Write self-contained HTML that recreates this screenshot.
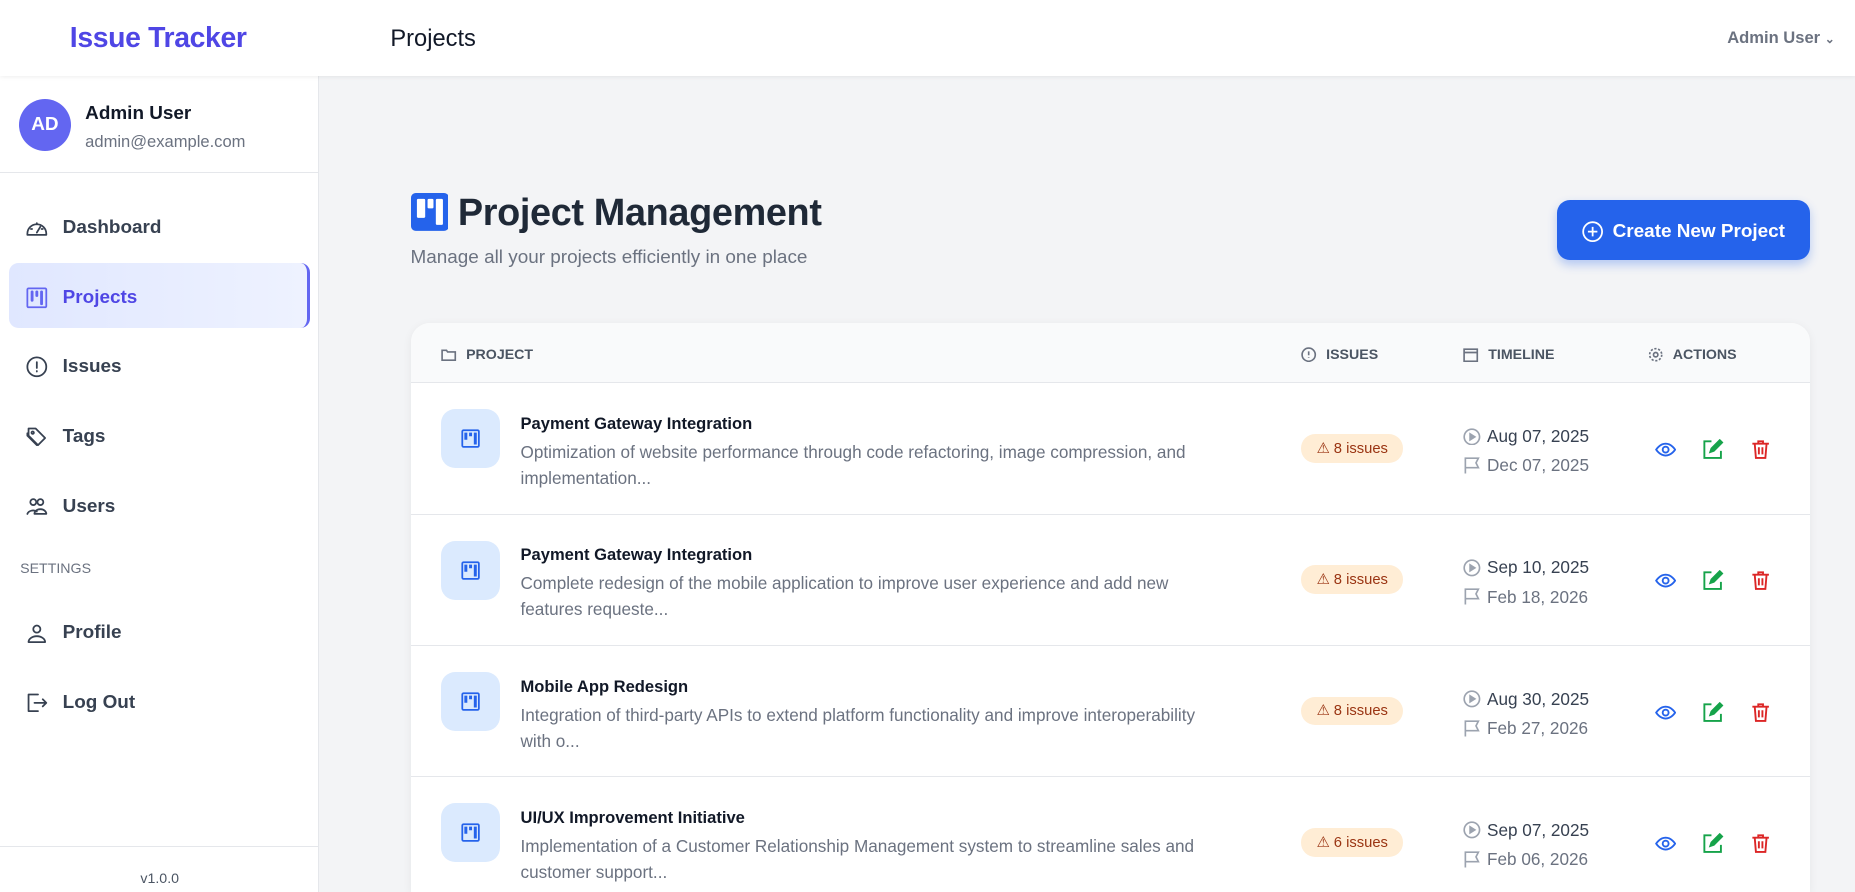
<!DOCTYPE html>
<html><head><meta charset="utf-8"><style>
*{box-sizing:border-box;margin:0;padding:0}
html,body{width:1855px;height:892px;overflow:hidden}
body{font-family:"Liberation Sans",sans-serif;background:#f3f4f6;}
#w{position:absolute;left:0;top:0;width:1568px;height:754px;zoom:1.18304;overflow:hidden;background:#f3f4f6}
.a{position:absolute;white-space:nowrap}
.hdr{left:0;top:0;width:1568px;height:64px;background:#fff;box-shadow:0 1px 4px rgba(0,0,0,.08);z-index:2}
.sb{left:0;top:64px;width:270px;height:690px;background:#fff;border-right:1px solid #e5e7eb}
.nav{position:absolute;left:8px;width:254px;height:55px;display:flex;align-items:center;padding-left:13px;padding-top:4px;font-size:16px;font-weight:bold;color:#374151}
.nav svg{width:20px;height:20px;margin-right:12px;fill:none;stroke:#374151;stroke-width:1.5;stroke-linecap:round;stroke-linejoin:round}
.card{left:347px;top:273px;width:1183px;height:481px;background:#fff;border-radius:16px 16px 0 0;box-shadow:0 2px 8px rgba(0,0,0,.06);overflow:hidden}
.th{position:absolute;top:0;left:0;width:100%;height:51px;background:#f9fafb;border-bottom:1px solid #e5e7eb;font-size:12px;font-weight:bold;color:#4b5563}
.th span{position:absolute;top:20px;display:flex;align-items:center}
.th svg{width:13px;height:13px;margin-right:8px;fill:none;stroke:#6b7280;stroke-width:1.5}
.row{position:absolute;left:0;width:100%;height:111px;border-bottom:1px solid #e5e7eb}
.ib{position:absolute;left:26px;top:22px;width:50px;height:50px;border-radius:12px;background:#dbeafe}
.ttl{position:absolute;left:93px;top:26px;font-size:14px;font-weight:bold;color:#111827}
.ds{position:absolute;left:93px;top:47px;width:585px;white-space:normal;font-size:14.5px;line-height:22px;color:#6b7280}
.bd{position:absolute;left:753px;top:43px;width:86px;height:24px;border-radius:12px;background:#ffedd5;color:#9a3412;font-size:12.5px;display:flex;align-items:center;justify-content:center}
.d1,.d2{position:absolute;left:890px;font-size:14.5px;display:flex;align-items:center}
.d1{top:36px;color:#374151}.d2{top:61px;color:#6b7280}
.d1 svg,.d2 svg{width:15px;height:15px;margin-right:5px;fill:none;stroke:#9ca3af;stroke-width:1.4}
.ac{position:absolute;top:47px;width:18px;height:18px}
</style></head><body><div id="w">
<div class="a hdr">
 <div class="a" style="left:59px;top:19px;font-size:24px;font-weight:bold;color:#4f46e5;letter-spacing:-.3px">Issue Tracker</div>
 <div class="a" style="left:330px;top:22px;font-size:20px;color:#111827">Projects</div>
 <div class="a" style="left:1460px;top:24px;font-size:14px;color:#6b7280;font-weight:bold">Admin User <span style="font-size:10px">&#8964;</span></div>
</div>
<div class="a sb">
 <div class="a" style="left:16px;top:20px;width:44px;height:44px;border-radius:50%;background:#6366f1;color:#fff;font-weight:bold;font-size:16px;display:flex;align-items:center;justify-content:center">AD</div>
 <div class="a" style="left:72px;top:23px;font-size:16px;font-weight:bold;color:#111827">Admin User</div>
 <div class="a" style="left:72px;top:48px;font-size:14px;color:#6b7280">admin@example.com</div>
 <div class="a" style="left:0;top:81px;width:270px;height:1px;background:#e5e7eb"></div>
 <div class="nav" style="top:99px"><svg viewBox="0 0 20 20"><path d="M2 15a8 8 0 1 1 16 0v1H2z"/><path d="M10 14l3-5"/><path d="M5 11h1M14 11h1M10 6v1"/></svg>Dashboard</div>
 <div class="nav" style="top:158px;background:linear-gradient(90deg,#e0e7ff,#eef2ff);border-right:3px solid #6366f1;border-radius:8px;color:#4f46e5"><svg viewBox="0 0 20 20" style="stroke:#6366f1"><rect x="2" y="2" width="16" height="16" rx="1"/><path d="M6 5v7M10 5v3M14 5v10" stroke-width="2.4"/></svg>Projects</div>
 <div class="nav" style="top:217px"><svg viewBox="0 0 20 20"><circle cx="10" cy="10" r="8"/><path d="M10 6v5M10 13.5v.5"/></svg>Issues</div>
 <div class="nav" style="top:276px"><svg viewBox="0 0 20 20"><path d="M3 3h6l8 8-6 6-8-8z"/><circle cx="6.5" cy="6.5" r="1"/><path d="M2 7v2l8 8"/></svg>Tags</div>
 <div class="nav" style="top:335px"><svg viewBox="0 0 20 20"><circle cx="7" cy="6" r="2.5"/><circle cx="13" cy="6" r="2.5"/><path d="M2 16a5 4 0 0 1 8-2M8 16a5 4 0 0 1 10 0z"/></svg>Users</div>
 <div class="a" style="left:17px;top:410px;font-size:12px;color:#6b7280">SETTINGS</div>
 <div class="nav" style="top:442px"><svg viewBox="0 0 20 20"><circle cx="10" cy="6" r="3"/><path d="M3 17a7 5 0 0 1 14 0z"/></svg>Profile</div>
 <div class="nav" style="top:501px"><svg viewBox="0 0 20 20"><path d="M11 3H3v14h8"/><path d="M8 10h10M15 7l3 3-3 3"/></svg>Log Out</div>
 <div class="a" style="left:0;top:651px;width:270px;height:1px;background:#e5e7eb"></div>
 <div class="a" style="left:0;top:672px;width:270px;text-align:center;font-size:12px;color:#4b5563">v1.0.0</div>
</div>
<svg class="a" style="left:347px;top:163px" width="32" height="32" viewBox="0 0 32 32"><rect width="32" height="32" rx="4" fill="#2563eb"/><rect x="5" y="5" width="7" height="16" rx="1" fill="#fff"/><rect x="14" y="5" width="5" height="8" rx="1" fill="#fff"/><rect x="21" y="5" width="6" height="22" rx="1" fill="#fff"/></svg>
<div class="a" style="left:387px;top:162px;font-size:32px;font-weight:bold;color:#1f2937;letter-spacing:-.3px">Project Management</div>
<div class="a" style="left:347px;top:209px;font-size:16px;color:#6b7280">Manage all your projects efficiently in one place</div>
<div class="a" style="left:1316px;top:169px;width:214px;height:51px;border-radius:11px;background:#2563eb;box-shadow:0 4px 8px rgba(37,99,235,.3);color:#fff;font-size:16px;font-weight:bold;display:flex;align-items:center;justify-content:center;padding-top:3px"><svg width="18" height="18" viewBox="0 0 18 18" style="margin-right:8px" fill="none" stroke="#fff" stroke-width="1.5"><circle cx="9" cy="9" r="8"/><path d="M9 5v8M5 9h8"/></svg>Create New Project</div>
<div class="a card">
 <div class="th">
  <span style="left:26px"><svg viewBox="0 0 14 14"><path d="M1 3h4l1 1.5h7V12H1z"/></svg>PROJECT</span>
  <span style="left:753px"><svg viewBox="0 0 14 14"><circle cx="7" cy="7" r="6"/><path d="M7 4v3.5M7 9.5v.5"/></svg>ISSUES</span>
  <span style="left:890px"><svg viewBox="0 0 14 14"><rect x="1" y="2" width="12" height="11"/><path d="M1 5h12"/></svg>TIMELINE</span>
  <span style="left:1046px"><svg viewBox="0 0 14 14"><circle cx="7" cy="7" r="2"/><circle cx="7" cy="7" r="5.5" stroke-dasharray="2 1.5"/></svg>ACTIONS</span>
 </div>
 <div class="row" style="top:51px"><div class="ib"><svg width="50" height="50" viewBox="0 0 50 50" fill="none" stroke="#2563eb"><rect x="18" y="18" width="14" height="14" stroke-width="1.5" rx="1"/><path d="M21 20v6M25 20v3M29 20v10" stroke-width="2.5"/></svg></div><div class="ttl">Payment Gateway Integration</div><div class="ds">Optimization of website performance through code refactoring, image compression, and implementation...</div><div class="bd">⚠ 8 issues</div><div class="d1"><svg viewBox="0 0 15 15"><circle cx="7.5" cy="7.5" r="6.5"/><path d="M6 5v5l4-2.5z" fill="#9ca3af"/></svg>Aug 07, 2025</div><div class="d2"><svg viewBox="0 0 15 15"><path d="M2 14V1h11l-2 4 2 4H2"/></svg>Dec 07, 2025</div>
 <svg class="ac" style="left:1052px" viewBox="0 0 18 18" fill="none" stroke="#2563eb" stroke-width="1.6"><path d="M1 9s3-5 8-5 8 5 8 5-3 5-8 5-8-5-8-5z"/><circle cx="9" cy="9" r="2.5"/></svg><svg class="ac" style="left:1092px" viewBox="0 0 18 18" fill="none" stroke="#16a34a" stroke-width="1.6"><path d="M8 2H2v14h14v-6"/><path d="M7 11l1-3 7-7 2 2-7 7z" fill="#16a34a"/></svg><svg class="ac" style="left:1132px" viewBox="0 0 18 18" fill="none" stroke="#dc2626" stroke-width="1.6"><path d="M2 4h14M7 4V2h4v2M4 4l1 12h8l1-12M7.5 7v6M10.5 7v6"/></svg></div>
 <div class="row" style="top:162px"><div class="ib"><svg width="50" height="50" viewBox="0 0 50 50" fill="none" stroke="#2563eb"><rect x="18" y="18" width="14" height="14" stroke-width="1.5" rx="1"/><path d="M21 20v6M25 20v3M29 20v10" stroke-width="2.5"/></svg></div><div class="ttl">Payment Gateway Integration</div><div class="ds">Complete redesign of the mobile application to improve user experience and add new features requeste...</div><div class="bd">⚠ 8 issues</div><div class="d1"><svg viewBox="0 0 15 15"><circle cx="7.5" cy="7.5" r="6.5"/><path d="M6 5v5l4-2.5z" fill="#9ca3af"/></svg>Sep 10, 2025</div><div class="d2"><svg viewBox="0 0 15 15"><path d="M2 14V1h11l-2 4 2 4H2"/></svg>Feb 18, 2026</div>
 <svg class="ac" style="left:1052px" viewBox="0 0 18 18" fill="none" stroke="#2563eb" stroke-width="1.6"><path d="M1 9s3-5 8-5 8 5 8 5-3 5-8 5-8-5-8-5z"/><circle cx="9" cy="9" r="2.5"/></svg><svg class="ac" style="left:1092px" viewBox="0 0 18 18" fill="none" stroke="#16a34a" stroke-width="1.6"><path d="M8 2H2v14h14v-6"/><path d="M7 11l1-3 7-7 2 2-7 7z" fill="#16a34a"/></svg><svg class="ac" style="left:1132px" viewBox="0 0 18 18" fill="none" stroke="#dc2626" stroke-width="1.6"><path d="M2 4h14M7 4V2h4v2M4 4l1 12h8l1-12M7.5 7v6M10.5 7v6"/></svg></div>
 <div class="row" style="top:273px"><div class="ib"><svg width="50" height="50" viewBox="0 0 50 50" fill="none" stroke="#2563eb"><rect x="18" y="18" width="14" height="14" stroke-width="1.5" rx="1"/><path d="M21 20v6M25 20v3M29 20v10" stroke-width="2.5"/></svg></div><div class="ttl">Mobile App Redesign</div><div class="ds">Integration of third-party APIs to extend platform functionality and improve interoperability with o...</div><div class="bd">⚠ 8 issues</div><div class="d1"><svg viewBox="0 0 15 15"><circle cx="7.5" cy="7.5" r="6.5"/><path d="M6 5v5l4-2.5z" fill="#9ca3af"/></svg>Aug 30, 2025</div><div class="d2"><svg viewBox="0 0 15 15"><path d="M2 14V1h11l-2 4 2 4H2"/></svg>Feb 27, 2026</div>
 <svg class="ac" style="left:1052px" viewBox="0 0 18 18" fill="none" stroke="#2563eb" stroke-width="1.6"><path d="M1 9s3-5 8-5 8 5 8 5-3 5-8 5-8-5-8-5z"/><circle cx="9" cy="9" r="2.5"/></svg><svg class="ac" style="left:1092px" viewBox="0 0 18 18" fill="none" stroke="#16a34a" stroke-width="1.6"><path d="M8 2H2v14h14v-6"/><path d="M7 11l1-3 7-7 2 2-7 7z" fill="#16a34a"/></svg><svg class="ac" style="left:1132px" viewBox="0 0 18 18" fill="none" stroke="#dc2626" stroke-width="1.6"><path d="M2 4h14M7 4V2h4v2M4 4l1 12h8l1-12M7.5 7v6M10.5 7v6"/></svg></div>
 <div class="row" style="top:384px"><div class="ib"><svg width="50" height="50" viewBox="0 0 50 50" fill="none" stroke="#2563eb"><rect x="18" y="18" width="14" height="14" stroke-width="1.5" rx="1"/><path d="M21 20v6M25 20v3M29 20v10" stroke-width="2.5"/></svg></div><div class="ttl">UI/UX Improvement Initiative</div><div class="ds">Implementation of a Customer Relationship Management system to streamline sales and customer support...</div><div class="bd">⚠ 6 issues</div><div class="d1"><svg viewBox="0 0 15 15"><circle cx="7.5" cy="7.5" r="6.5"/><path d="M6 5v5l4-2.5z" fill="#9ca3af"/></svg>Sep 07, 2025</div><div class="d2"><svg viewBox="0 0 15 15"><path d="M2 14V1h11l-2 4 2 4H2"/></svg>Feb 06, 2026</div>
 <svg class="ac" style="left:1052px" viewBox="0 0 18 18" fill="none" stroke="#2563eb" stroke-width="1.6"><path d="M1 9s3-5 8-5 8 5 8 5-3 5-8 5-8-5-8-5z"/><circle cx="9" cy="9" r="2.5"/></svg><svg class="ac" style="left:1092px" viewBox="0 0 18 18" fill="none" stroke="#16a34a" stroke-width="1.6"><path d="M8 2H2v14h14v-6"/><path d="M7 11l1-3 7-7 2 2-7 7z" fill="#16a34a"/></svg><svg class="ac" style="left:1132px" viewBox="0 0 18 18" fill="none" stroke="#dc2626" stroke-width="1.6"><path d="M2 4h14M7 4V2h4v2M4 4l1 12h8l1-12M7.5 7v6M10.5 7v6"/></svg></div>
</div>
</div></body></html>
